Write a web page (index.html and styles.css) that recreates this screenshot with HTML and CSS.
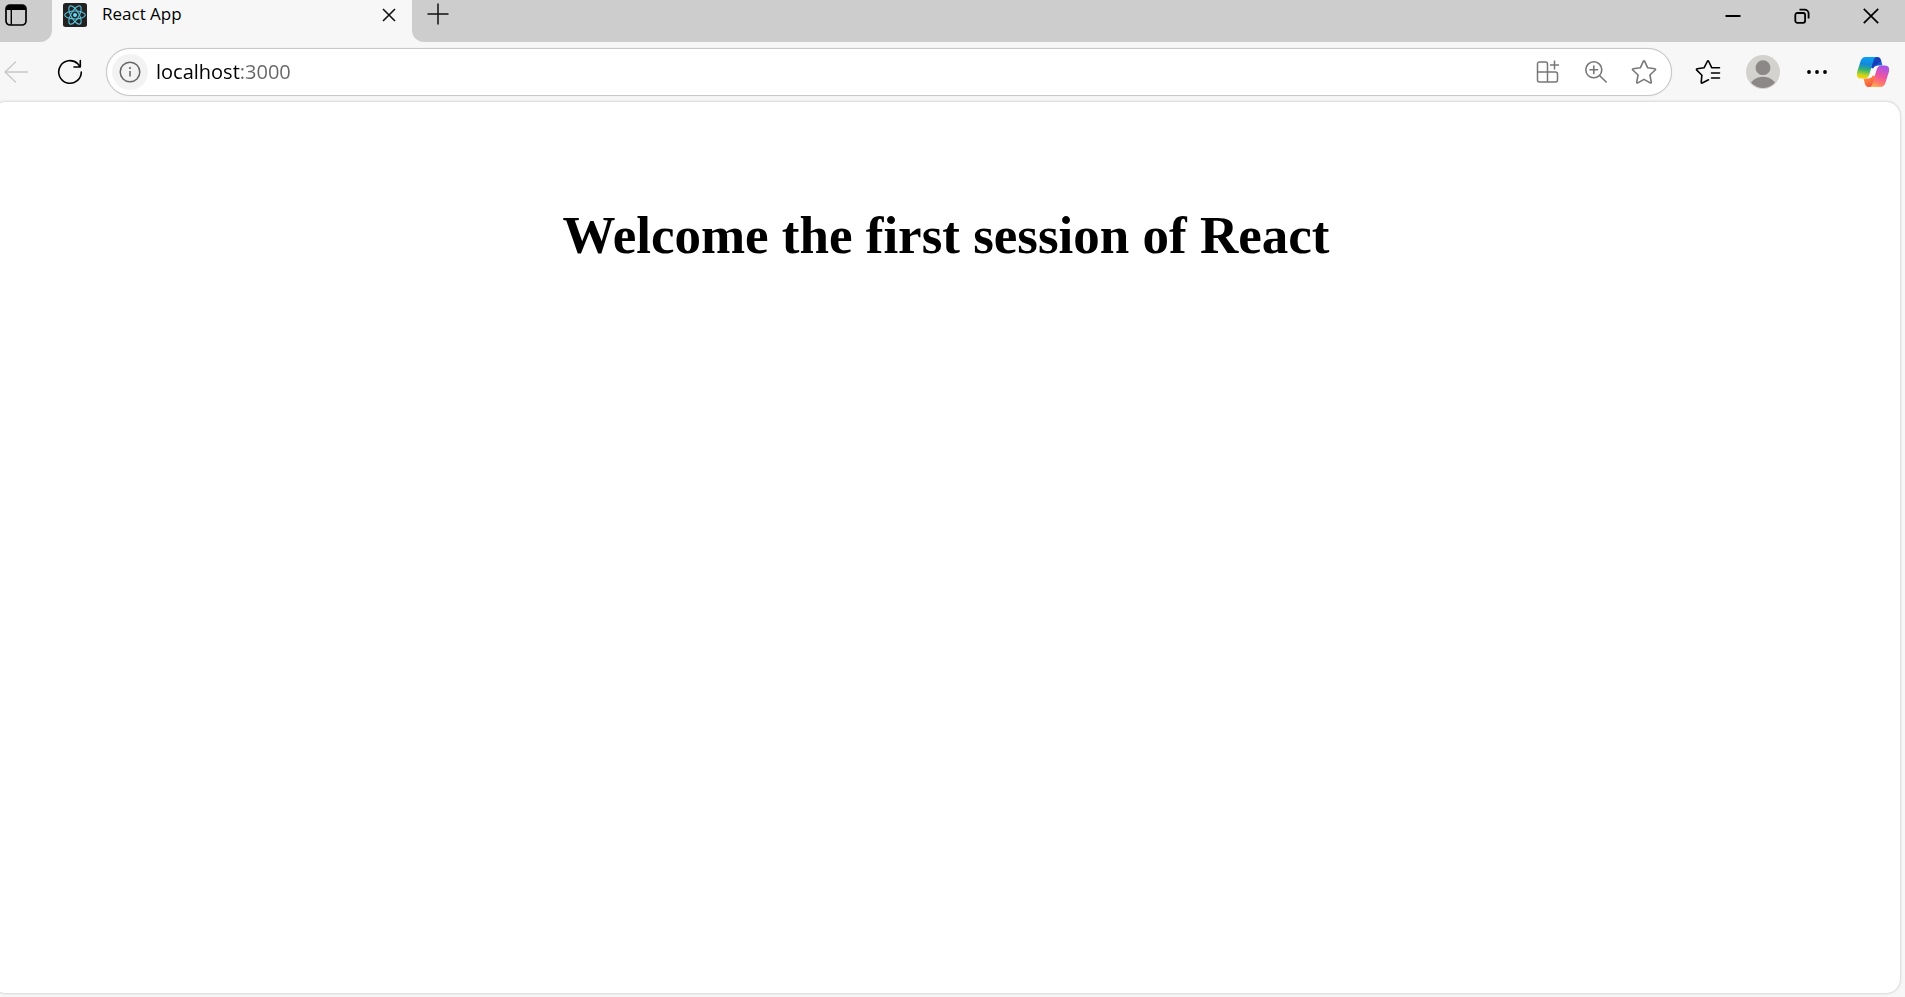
FILE: index.html
```html
<!DOCTYPE html>
<html lang="en">
<head>
<meta charset="utf-8">
<title>React App</title>
<link rel="stylesheet" href="styles.css">
</head>
<body>
<div class="browser">
  <header class="titlebar">
    <div class="strip strip-left">
      <button class="btn tab-actions" aria-label="Tab actions">
        <svg width="24" height="24" viewBox="0 0 24 24" fill="none" stroke="#000" stroke-width="1.7"><rect x="2" y="2" width="20" height="20" rx="4"/><path d="M2 7V6a4 4 0 0 1 4-4h12a4 4 0 0 1 4 4v1z" fill="#000" stroke="none"/><path d="M7.300 7v15" stroke-width="1.400"/></svg>
      </button>
    </div>
    <div class="tab">
      <svg width="24" height="24" viewBox="0 0 24 24"><rect width="24" height="24" rx="2.5" fill="#222"/><g fill="none" stroke="#58c4dc" stroke-width="1.1"><ellipse cx="12" cy="12" rx="10.3" ry="4"/><ellipse cx="12" cy="12" rx="10.3" ry="4" transform="rotate(60 12 12)"/><ellipse cx="12" cy="12" rx="10.3" ry="4" transform="rotate(120 12 12)"/></g><circle cx="12" cy="12" r="2" fill="#61dafb"/></svg>
      <span class="tab-title">React App</span>
      <button class="btn tab-close" aria-label="Close tab">
        <svg width="14" height="14" viewBox="0 0 14 14" stroke="#111" stroke-width="1.6"><path d="M1 1l12 12M13 1L1 13"/></svg>
      </button>
    </div>
    <div class="strip strip-right">
      <button class="btn new-tab" aria-label="New tab">
        <svg width="22" height="22" viewBox="0 0 22 22" stroke="#111" stroke-width="1.5"><path d="M11 .5v21M.5 11h21"/></svg>
      </button>
      <div class="window-controls">
        <button class="btn" aria-label="Minimize">
          <svg width="16" height="16" viewBox="0 0 16 16" stroke="#000" stroke-width="2"><path d="M.5 8h15"/></svg>
        </button>
        <button class="btn" aria-label="Restore">
          <svg width="16" height="16" viewBox="0 0 16 16" fill="none" stroke="#000" stroke-width="1.8"><rect x="1.3" y="5" width="9.8" height="9.8" rx="2"/><path d="M5.5 1.6h5.1a4 4 0 0 1 4 4v5"/></svg>
        </button>
        <button class="btn" aria-label="Close">
          <svg width="16" height="16" viewBox="0 0 16 16" stroke="#000" stroke-width="1.7"><path d="M.8 .8l14.4 14.4M15.2 .8L.8 15.2"/></svg>
        </button>
      </div>
    </div>
  </header>

  <nav class="toolbar">
    <button class="btn back" aria-label="Back">
      <svg width="24" height="24" viewBox="0 0 24 24" fill="none" stroke="#c8c8c8" stroke-width="1.4"><path d="M12 1.5L1 12l11 10.500M1 12h23"/></svg>
    </button>
    <button class="btn" aria-label="Refresh">
      <svg width="26" height="26" viewBox="0 0 26 26" fill="none" stroke="#000" stroke-width="1.6" stroke-linecap="round" stroke-linejoin="round"><path d="M24.300 13A11.300 11.300 0 1 1 20.700 4.700L23 7.500M23.300 1.500v6.500h-6.300"/></svg>
    </button>
    <form class="address">
      <button type="button" class="btn site-info" aria-label="Site information">
        <svg width="22" height="22" viewBox="0 0 22 22" fill="none" stroke="#666" stroke-width="1.5"><circle cx="11" cy="11" r="9.800"/><path d="M11 10v5.500"/><circle cx="11" cy="7" r="1.100" fill="#666" stroke="none"/></svg>
      </button>
      <input class="url" type="text" aria-label="Address" value="localhost:3000" spellcheck="false">
      <button type="button" class="btn" aria-label="Install app">
        <svg width="24" height="24" viewBox="0 0 24 24" fill="none" stroke="#777" stroke-width="1.5"><path d="M11.500 12V4a2 2 0 0 0-2-2H3.500a2 2 0 0 0-2 2v16a2 2 0 0 0 2 2h16a2 2 0 0 0 2-2v-6a2 2 0 0 0-2-2h-18M11.500 12v10M18.500 .5v9M14 5h9"/></svg>
      </button>
      <button type="button" class="btn" aria-label="Zoom">
        <svg width="24" height="24" viewBox="0 0 24 24" fill="none" stroke="#777" stroke-width="1.600" stroke-linecap="round"><circle cx="9.800" cy="9.800" r="8"/><path d="M15.500 15.500l6.700 6.500M9.800 6v7.600M6 9.800h7.600"/></svg>
      </button>
      <button type="button" class="btn" aria-label="Add to favorites">
        <svg width="26" height="26" viewBox="0 0 26 26" fill="none" stroke="#777" stroke-width="1.600" stroke-linejoin="round"><path d="M12.300 2.300q.7-1.200 1.400 0l3 6.500 7.100.9q1.300.3.400 1.300l-5.300 5 1.400 7.100q.1 1.300-1.100.8L13 20.400l-6.200 3.500q-1.200.5-1.100-.8l1.400-7.100-5.300-5q-.9-1 .4-1.300l7.100-.9z"/></svg>
      </button>
    </form>
    <button class="btn favorites" aria-label="Favorites">
      <svg width="26" height="26" viewBox="0 0 26 26" fill="none" stroke="#000" stroke-width="1.600" stroke-linejoin="round" stroke-linecap="round"><path d="M13.500 20.800L7.200 24q-1.200.4-1-.8l.7-7L1.800 11.100q-.9-1 .4-1.300l6.800-1 3.300-6.300q.7-1.200 1.400 0l3 6.200H24.500M16.500 14h8M16.500 19h8"/></svg>
    </button>
    <button class="btn" aria-label="Profile">
      <svg width="34" height="34" viewBox="0 0 34 34"><defs><clipPath id="face"><circle cx="17" cy="17" r="16"/></clipPath></defs><circle cx="17" cy="17" r="17" fill="#d3d2cf"/><g fill="#8b8887" clip-path="url(#face)"><circle cx="17" cy="12.700" r="7.400"/><ellipse cx="17" cy="32" rx="13" ry="10.300"/></g></svg>
    </button>
    <button class="btn" aria-label="Settings and more">
      <svg width="22" height="6" viewBox="0 0 22 6"><circle cx="3" cy="3" r="1.900"/><circle cx="11" cy="3" r="1.900"/><circle cx="19" cy="3" r="1.900"/></svg>
    </button>
    <button class="btn copilot" aria-label="Copilot">
      <svg width="34" height="32" viewBox="0 0 34 32">
        <defs>
          <linearGradient id="blue" x1=".5" y1="0" x2=".35" y2="1"><stop offset="0" stop-color="#0aa0f0"/><stop offset=".35" stop-color="#1488dc"/><stop offset=".6" stop-color="#35b56c"/><stop offset=".85" stop-color="#c8d420"/><stop offset="1" stop-color="#ffd000"/></linearGradient>
          <linearGradient id="pink" x1=".7" y1="0" x2=".35" y2="1"><stop offset="0" stop-color="#a552ee"/><stop offset=".5" stop-color="#f0569c"/><stop offset=".8" stop-color="#ff7b68"/><stop offset="1" stop-color="#ffae50"/></linearGradient>
          <linearGradient id="navy" x1="0" y1="0" x2="1" y2="1"><stop offset="0" stop-color="#1554d2"/><stop offset=".5" stop-color="#1838b8"/><stop offset="1" stop-color="#20a0ec"/></linearGradient>
          <linearGradient id="ember" x1="0" y1="0" x2=".5" y2="1"><stop offset="0" stop-color="#ffa246"/><stop offset="1" stop-color="#f4543c"/></linearGradient>
        </defs>
        <path d="M17 1h4.500q2.700 0 3.500 3l1.500 5.500H22q-3 0-4 3L15 12z" fill="url(#navy)"/>
        <path d="M17 31h-4.500q-2.700 0-3.500-3L7.500 22.500H12q3 0 4-3L19 20z" fill="url(#ember)"/>
        <path d="M18.500 10.500q-.7.800-1 2L14.500 21.500h1q.7-.8 1-2l3-9z" fill="#fff"/>
        <path d="M9.500 1h11.500q-2.700 0-3.700 4l-4 13.500q-1.200 4-4.800 4H5q-5 0-4-6L4.300 6Q5.700 1 9.500 1z" fill="url(#blue)"/>
        <path d="M24.500 31H13q2.700 0 3.700-4l4-13.500q1.200-4 4.800-4H29q5 0 4 6l-3.300 10.500q-1.400 5-5.200 5z" fill="url(#pink)"/>
      </svg>
    </button>
  </nav>

  <main class="page">
    <h1>Welcome the first session of React</h1>
  </main>
</div>
</body>
</html>
```
FILE: styles.css
```css
* {
  box-sizing: border-box;
}

body {
  margin: 0;
  background: #f7f7f7;
  color: #000;
  font-family: "Open Sans", "Noto Sans", sans-serif;
}

.browser {
  display: flex;
  flex-direction: column;
  min-height: 100vh;
  padding-bottom: 4px;
  overflow: hidden;
}

.btn {
  display: flex;
  align-items: center;
  justify-content: center;
  flex: none;
  width: 40px;
  height: 40px;
  padding: 0;
  border: 0;
  background: none;
}

.titlebar {
  display: flex;
  height: 42px;
}

.strip {
  display: flex;
  background: #cdcdcd;
}

.strip-left {
  width: 52px;
  border-bottom-right-radius: 12px;
}

.strip-right {
  flex: 1;
  justify-content: space-between;
  border-bottom-left-radius: 12px;
}

.tab-actions {
  width: 32px;
  height: 30px;
}

.tab {
  display: flex;
  align-items: center;
  width: 360px;
  height: 30px;
  padding: 0 15px 0 11px;
}

.tab-title {
  flex: 1;
  margin-left: 15px;
  font-size: 17px;
  line-height: 20px;
  padding-bottom: 2px;
}

.tab-close {
  width: 16px;
  height: 32px;
}

.new-tab {
  width: 52px;
  height: 28px;
}

.window-controls {
  display: flex;
  padding-right: 7px;
}

.window-controls .btn {
  width: 55px;
  height: 32px;
  margin-left: 14px;
}

.toolbar {
  display: flex;
  align-items: center;
  gap: 14px;
  height: 60px;
  padding-right: 10px;
}

.back {
  width: 36px;
  padding-right: 4px;
}

.address {
  display: flex;
  align-items: center;
  gap: 8px;
  flex: 1;
  height: 48px;
  margin: 0 1px 0 2px;
  padding: 0 7px 0 5px;
  border: 1px solid #c8c8c8;
  border-radius: 24px;
  background: #fff;
  box-shadow: 0 0 1px #c8c8c8;
}

.site-info {
  width: 36px;
  height: 36px;
  border-radius: 50%;
  background: #f3f3f3;
}

/* Host name in black, port in grey */
.url {
  flex: 1;
  min-width: 0;
  padding: 0;
  border: 0;
  outline: none;
  font: 20px/28px "Open Sans", "Noto Sans", sans-serif;
  color: transparent;
  caret-color: #000;
  background: linear-gradient(to right, #000 84px, #666 84px);
  background-clip: text;
}

.favorites {
  width: 42px;
}

.copilot {
  width: 44px;
}

.page {
  flex: 1;
  margin: 0 5px 0 -8px;
  border-radius: 14px;
  background: #fff;
  box-shadow: 0 0 3px rgba(0, 0, 0, 0.25);
}

h1 {
  margin: 103px 0 0;
  font: bold 53px/60px "Liberation Serif", "Times New Roman", serif;
  text-align: center;
}
```
